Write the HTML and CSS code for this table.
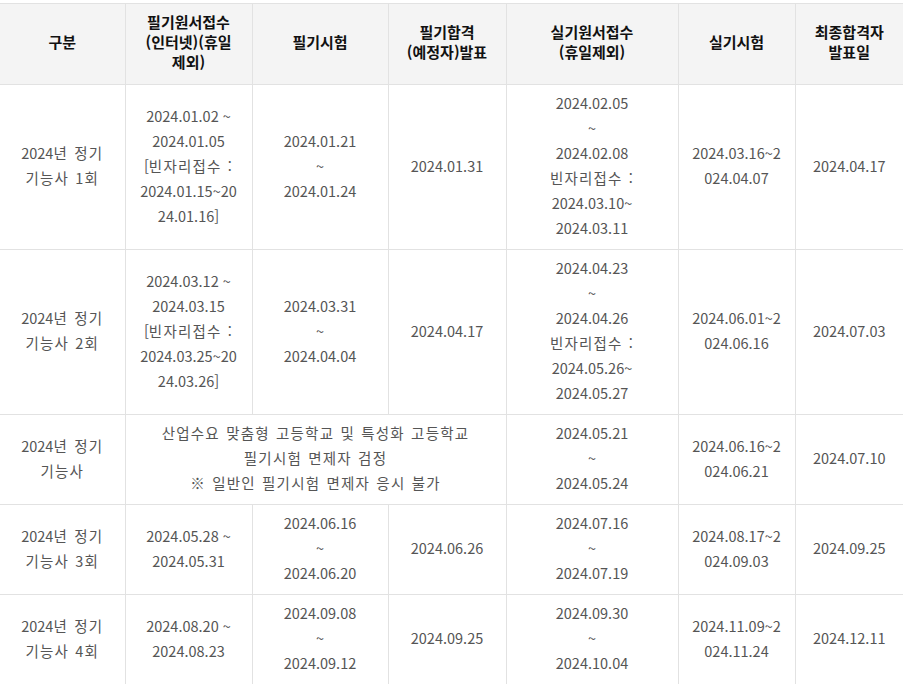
FILE: index.html
```html
<!DOCTYPE html>
<html lang="ko">
<head>
<meta charset="utf-8">
<title>2024년 정기 기능사 시험일정</title>
<link rel="stylesheet" href="styles.css">
</head>
<body>
<table class="schedule">
  <colgroup>
    <col class="c1"><col class="c2"><col class="c3"><col class="c4"><col class="c5"><col class="c6"><col class="c7">
  </colgroup>
  <thead>
    <tr>
      <th>구분</th>
      <th>필기원서접수<br>(인터넷)(휴일<br>제외)</th>
      <th>필기시험</th>
      <th>필기합격<br>(예정자)발표</th>
      <th>실기원서접수<br>(휴일제외)</th>
      <th>실기시험</th>
      <th>최종합격자<br>발표일</th>
    </tr>
  </thead>
  <tbody>
    <tr>
      <td>2024<span class="k">년 정기</span><br><span class="k">기능사 1회</span></td>
      <td>2024.01.02 ~<br>2024.01.05<br>[<span class="k">빈자리접수 :</span><br>2024.01.15~20<br>24.01.16]</td>
      <td>2024.01.21<br>~<br>2024.01.24</td>
      <td>2024.01.31</td>
      <td>2024.02.05<br>~<br>2024.02.08<br><span class="k">빈자리접수 :</span><br>2024.03.10~<br>2024.03.11</td>
      <td>2024.03.16~2<br>024.04.07</td>
      <td>2024.04.17</td>
    </tr>
    <tr>
      <td>2024<span class="k">년 정기</span><br><span class="k">기능사 2회</span></td>
      <td>2024.03.12 ~<br>2024.03.15<br>[<span class="k">빈자리접수 :</span><br>2024.03.25~20<br>24.03.26]</td>
      <td>2024.03.31<br>~<br>2024.04.04</td>
      <td>2024.04.17</td>
      <td>2024.04.23<br>~<br>2024.04.26<br><span class="k">빈자리접수 :</span><br>2024.05.26~<br>2024.05.27</td>
      <td>2024.06.01~2<br>024.06.16</td>
      <td>2024.07.03</td>
    </tr>
    <tr>
      <td>2024<span class="k">년 정기</span><br><span class="k">기능사</span></td>
      <td colspan="3" class="k">산업수요 맞춤형 고등학교 및 특성화 고등학교<br>필기시험 면제자 검정<br>※ 일반인 필기시험 면제자 응시 불가</td>
      <td>2024.05.21<br>~<br>2024.05.24</td>
      <td>2024.06.16~2<br>024.06.21</td>
      <td>2024.07.10</td>
    </tr>
    <tr>
      <td>2024<span class="k">년 정기</span><br><span class="k">기능사 3회</span></td>
      <td>2024.05.28 ~<br>2024.05.31</td>
      <td>2024.06.16<br>~<br>2024.06.20</td>
      <td>2024.06.26</td>
      <td>2024.07.16<br>~<br>2024.07.19</td>
      <td>2024.08.17~2<br>024.09.03</td>
      <td>2024.09.25</td>
    </tr>
    <tr>
      <td>2024<span class="k">년 정기</span><br><span class="k">기능사 4회</span></td>
      <td>2024.08.20 ~<br>2024.08.23</td>
      <td>2024.09.08<br>~<br>2024.09.12</td>
      <td>2024.09.25</td>
      <td>2024.09.30<br>~<br>2024.10.04</td>
      <td>2024.11.09~2<br>024.11.24</td>
      <td>2024.12.11</td>
    </tr>
  </tbody>
</table>
</body>
</html>
```

FILE: styles.css
```css
html, body {
  margin: 0;
  padding: 0;
  background: #ffffff;
}

body {
  padding-top: 3px;
  font-family: "Noto Sans CJK KR", "Noto Sans", sans-serif;
}

.schedule {
  width: 903px;
  table-layout: fixed;
  border-collapse: collapse;
  border-top: 1px solid #e2e2e2;
}

.c1 { width: 125px; }
.c2 { width: 127px; }
.c3 { width: 136px; }
.c4 { width: 118px; }
.c5 { width: 172px; }
.c6 { width: 117px; }
.c7 { width: 108px; }

.schedule th,
.schedule td {
  border: 1px solid #e2e2e2;
  text-align: center;
  vertical-align: middle;
}

.schedule tr > :first-child {
  border-left: none;
}

.schedule tr > :last-child {
  border-right: none;
}

.schedule th {
  background: #f4f4f4;
  color: #111;
  font-size: 15px;
  font-weight: bold;
  line-height: 20px;
  padding: 8px 4px 12px;
}

.schedule td {
  color: #555;
  font-size: 14.5px;
  line-height: 25px;
  white-space: nowrap;
  padding: 5px 4px 9px;
}

.k {
  letter-spacing: 1.2px;
  word-spacing: 1px;
}
```
